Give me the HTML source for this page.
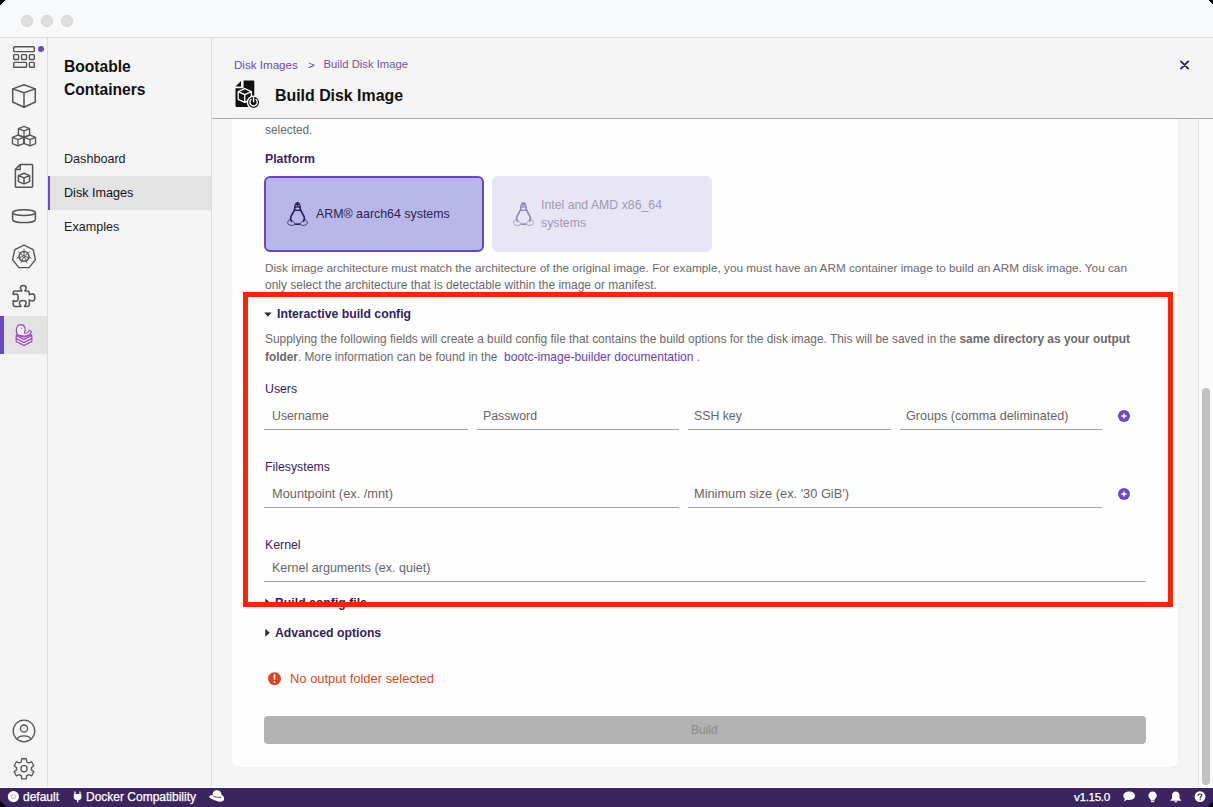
<!DOCTYPE html>
<html><head><meta charset="utf-8">
<style>
*{box-sizing:border-box;margin:0;padding:0}
html,body{width:1213px;height:807px;overflow:hidden;background:#f5f5f5;font-family:"Liberation Sans",sans-serif;position:relative}
.a{position:absolute}
.t{position:absolute;white-space:nowrap;line-height:1}
svg{position:absolute;overflow:visible}
.ic{fill:none;stroke:#555;stroke-width:1.5;stroke-linejoin:round;stroke-linecap:round}
.g{color:#6b6b6b;font-size:11.85px}
.lbl{font-size:12.3px;color:#36255f}
.ph{font-size:12.3px;color:#666}
.ul{position:absolute;height:1px;background:#a6a6a6}
.hd{font-size:12.25px;font-weight:bold;color:#2e2260}
</style></head>
<body>
<!-- title bar -->
<div class="a" style="left:0;top:0;width:1213px;height:38px;background:#f8f9fa;border-bottom:1px solid #dcdcdc"></div>
<div class="a" style="left:21px;top:15px;width:12px;height:12px;border-radius:50%;background:#dfdfdf;border:1px solid #d2d2d2"></div>
<div class="a" style="left:41px;top:15px;width:12px;height:12px;border-radius:50%;background:#dfdfdf;border:1px solid #d2d2d2"></div>
<div class="a" style="left:61px;top:15px;width:12px;height:12px;border-radius:50%;background:#dfdfdf;border:1px solid #d2d2d2"></div>

<!-- icon nav -->
<div class="a" style="left:0;top:38px;width:48px;height:750px;background:#f5f5f5;border-right:1px solid #dddddd"></div>
<div class="a" style="left:0;top:316px;width:47px;height:38px;background:#e3e3e3"></div>
<div class="a" style="left:0;top:316px;width:4px;height:38px;background:#6d48c4"></div>

<svg width="48" height="788" style="left:0;top:0">
 <!-- dashboard -->
 <g class="ic" style="stroke-width:1.4">
  <rect x="13.7" y="46.7" width="20.6" height="4.9" rx="0.8"/>
  <rect x="13.7" y="54.6" width="4.9" height="4.9" rx="0.8"/>
  <rect x="21.6" y="54.6" width="4.9" height="4.9" rx="0.8"/>
  <rect x="29.4" y="54.6" width="4.9" height="4.9" rx="0.8"/>
  <rect x="13.7" y="62.4" width="12.8" height="4.9" rx="0.8"/>
  <rect x="29.4" y="62.4" width="4.9" height="4.9" rx="0.8"/>
 </g>
 <circle cx="41" cy="49" r="3" fill="#6d48c4"/>
 <!-- containers cube -->
 <g class="ic">
  <path d="M24 84.8 L35.3 88.9 V102 L24 107.2 L12.7 102 V88.9 Z"/>
  <path d="M12.7 88.9 L24 92.8 L35.3 88.9 M24 92.8 V107"/>
 </g>
 <!-- pods -->
 <g class="ic" style="stroke-width:1.3">
  <path d="M24 126.3 L29.6 128.6 V134.8 L24 137.1 L18.4 134.8 V128.6 Z M18.4 128.6 L24 130.9 L29.6 128.6 M24 130.9 V137"/>
  <path d="M18 135.1 L23.6 137.4 V143.6 L18 145.9 L12.4 143.6 V137.4 Z M12.4 137.4 L18 139.7 L23.6 137.4 M18 139.7 V145.8"/>
  <path d="M30 135.1 L35.6 137.4 V143.6 L30 145.9 L24.4 143.6 V137.4 Z M24.4 137.4 L30 139.7 L35.6 137.4 M30 139.7 V145.8"/>
 </g>
 <!-- images doc -->
 <g class="ic">
  <path d="M20.2 164.6 H31.8 a0.8 0.8 0 0 1 0.8 0.8 V186.4 a0.8 0.8 0 0 1 -0.8 0.8 H16.2 a0.8 0.8 0 0 1 -0.8 -0.8 V169.4 Z"/>
  <path d="M20.2 164.8 V169.6 H15.6"/>
  <path d="M24 173.3 L29.6 175.6 V181.6 L24 183.9 L18.4 181.6 V175.6 Z M18.4 175.6 L24 177.9 L29.6 175.6 M24 177.9 V183.8"/>
 </g>
 <!-- volumes -->
 <g class="ic">
  <ellipse cx="24" cy="212.6" rx="11.4" ry="2.9"/>
  <path d="M12.6 212.6 V219.4 A11.4 3.2 0 0 0 35.4 219.4 V212.6"/>
 </g>
 <!-- kubernetes -->
 <g class="ic" style="stroke-width:1.4">
  <path d="M24.00 245.24 L33.19 249.67 L35.47 259.62 L29.10 267.60 L18.90 267.60 L12.53 259.62 L14.81 249.67 Z"/>
  <circle cx="24" cy="256.4" r="4.9" style="stroke-width:1.5"/>
  <circle cx="24" cy="256.4" r="1.2" style="stroke-width:1"/>
  <path d="M24.00 255.00 L24.00 249.20 M25.09 255.53 L29.63 251.91 M25.36 256.71 L31.02 258.00 M24.61 257.66 L27.12 262.89 M23.39 257.66 L20.88 262.89 M22.64 256.71 L16.98 258.00 M22.91 255.53 L18.37 251.91 " style="stroke-width:0.9"/>
 </g>
 <!-- extensions puzzle -->
 <g class="ic" style="stroke-width:1.5">
  <path d="M15.2 291.1 H21.8 C21.8 290.2 20.4 289.6 20.4 287.8 C20.4 286.2 21.6 285.4 23.3 285.4 C25 285.4 26.2 286.2 26.2 287.8 C26.2 289.6 24.8 290.2 24.8 291.1 H27.3 A2 2 0 0 1 29.3 293.1 V294.8 C30.2 294.8 30.8 293.8 32.4 293.8 C34 293.8 34.8 295 34.8 297.4 C34.8 299.8 34 301 32.4 301 C30.8 301 30.2 300 29.3 300 V304.5 A2 2 0 0 1 27.3 306.5 H24.6 C24.6 305.4 26.2 304.8 26.2 303 C26.2 301.4 25 300.6 22.8 300.6 C20.6 300.6 19.4 301.4 19.4 303 C19.4 304.8 21 305.4 21 306.5 H15.2 A2 2 0 0 1 13.2 304.5 V300.6 C14.2 300.6 14.8 301.4 16 301.4 C17.4 301.4 18.2 300 18.2 297.6 C18.2 295.2 17.4 294 16 294 C14.8 294 14.2 294.6 13.2 294.6 V293.1 A2 2 0 0 1 15.2 291.1 Z"/>
 </g>
 <!-- bootc -->
 <g fill="none" stroke="#9b3fc0" stroke-width="1.1" stroke-linejoin="round" stroke-linecap="round">
  <path d="M16.2 335.6 L24 339.4 L31.8 335.6 V341.4 L24 345.6 L16.2 341.4 Z"/>
  <path d="M16.2 338.4 L24 342.4 L31.8 338.4"/>
  <path d="M16.4 334.8 L24 337.2 L31.6 334.8"/>
  <path d="M17.2 334.2 C15.4 331.6 16 324.6 20.8 324.6 C25.4 324.6 25.8 330 24.4 333 C26.2 333.6 28.6 332.6 29.4 330.4 L31.4 331.4 C31 334 28 336 24.4 336 C21 336 18.6 335.6 17.2 334.2 Z" fill="#f7f0fa"/>
  <circle cx="21.4" cy="328.6" r="0.6" fill="#9b3fc0" stroke="none"/>
 </g>
 <!-- account -->
 <g class="ic" style="stroke-width:1.3">
  <circle cx="24" cy="731" r="10.8"/>
  <circle cx="24" cy="728.6" r="3.6"/>
  <path d="M17.2 739.2 C18.5 734.8 29.5 734.8 30.8 739.2"/>
 </g>
 <!-- gear -->
 <g class="ic" style="stroke-width:1.3">
  <path d="M21.23 761.94 L21.68 758.76 L26.32 758.76 L26.77 761.94 L28.56 762.97 L31.53 761.78 L33.85 765.79 L31.33 767.77 L31.33 769.83 L33.85 771.81 L31.53 775.82 L28.56 774.63 L26.77 775.66 L26.32 778.84 L21.68 778.84 L21.23 775.66 L19.44 774.63 L16.47 775.82 L14.15 771.81 L16.67 769.83 L16.67 767.77 L14.15 765.79 L16.47 761.78 L19.44 762.97 Z"/>
  <circle cx="24" cy="768.8" r="3.1"/>
 </g>
</svg>

<!-- sub nav -->
<div class="a" style="left:48px;top:38px;width:164px;height:750px;background:#f5f5f5;border-right:1px solid #dcdcdc"></div>
<div class="t" style="left:64px;top:58.7px;font-size:15.6px;font-weight:bold;color:#111">Bootable</div>
<div class="t" style="left:64px;top:82.2px;font-size:15.6px;font-weight:bold;color:#111">Containers</div>
<div class="t" style="left:64px;top:152.5px;font-size:12.6px;color:#222">Dashboard</div>
<div class="a" style="left:48px;top:176px;width:163px;height:34px;background:#e3e3e3"></div>
<div class="a" style="left:48px;top:176px;width:2px;height:34px;background:#6d48c4"></div>
<div class="t" style="left:64px;top:187px;font-size:12.6px;color:#111">Disk Images</div>
<div class="t" style="left:64px;top:221.3px;font-size:12.6px;color:#222">Examples</div>

<!-- main header -->
<div class="a" style="left:212px;top:38px;width:1001px;height:81px;background:#f5f5f5;border-bottom:1px solid #ababab"></div>
<div class="t" style="left:234px;top:59.4px;font-size:11.6px;color:#7446c8">Disk Images</div>
<div class="t" style="left:308px;top:59.4px;font-size:11.6px;color:#5b4a86">&gt;</div>
<div class="t" style="left:323.5px;top:59.4px;font-size:11.25px;color:#6d5c96">Build Disk Image</div>
<div class="t" style="left:275px;top:87.6px;font-size:15.9px;font-weight:bold;color:#111">Build Disk Image</div>
<svg width="30" height="30" style="left:0;top:0">
 <path d="M243.6 80.5 H253.2 a1.1 1.1 0 0 1 1.1 1.1 V106 a1 1 0 0 1 -1 1 H236.5 a1 1 0 0 1 -1 -1 V88.3 H243.6 Z" fill="#111"/>
 <path d="M235.6 86.4 L241 81 V86.4 Z" fill="#111"/>
 <g fill="none" stroke="#fff" stroke-width="1.3" stroke-linejoin="round">
  <path d="M244.8 88.6 L251.4 91.6 V99.4 L244.8 102.4 L238.2 99.4 V91.6 Z M238.2 91.6 L244.8 94.6 L251.4 91.6 M244.8 94.6 V102.2"/>
 </g>
 <circle cx="253.6" cy="102.3" r="6.2" fill="#111" stroke="#fff" stroke-width="1.4"/>
 <path d="M251 99.6 A3.7 3.7 0 1 0 256.2 99.6" fill="none" stroke="#fff" stroke-width="1.4" stroke-linecap="round"/>
 <path d="M253.6 97.6 V101.8" stroke="#fff" stroke-width="1.4" stroke-linecap="round"/>
</svg>
<svg width="10" height="10" style="left:0;top:0">
 <path d="M1181 61.4 L1188.2 68.6 M1188.2 61.4 L1181 68.6" stroke="#2f2461" stroke-width="1.9" stroke-linecap="round"/>
</svg>

<!-- content -->
<div class="a" style="left:232px;top:119px;width:946px;height:648px;background:#fefefe;border-radius:0 0 8px 8px"></div>
<!-- scrollbar -->
<div class="a" style="left:1198px;top:119px;width:15px;height:669px;background:#fafafa;border-left:1px solid #e2e2e2"></div>
<div class="a" style="left:1202px;top:388px;width:8px;height:397px;background:#c1c1c1;border-radius:4px"></div>

<div class="t g" style="left:265px;top:125px">selected.</div>
<div class="t" style="left:265px;top:152.7px;font-size:12.3px;font-weight:bold;color:#38275f">Platform</div>

<div class="a" style="left:264px;top:176px;width:220px;height:76px;background:#b9b7e9;border:2px solid #6c45c4;border-radius:6px"></div>
<div class="t" style="left:316px;top:207.6px;font-size:12.4px;color:#2b2353">ARM® aarch64 systems</div>
<div class="a" style="left:492px;top:176px;width:220px;height:76px;background:#e8e6f5;border-radius:6px"></div>
<div class="t" style="left:541px;top:198.6px;font-size:12.3px;color:#9d99b7">Intel and AMD x86_64</div>
<div class="t" style="left:541px;top:217px;font-size:12.3px;color:#9d99b7">systems</div>
<svg width="20" height="24" style="left:0;top:0"><g transform="translate(0 0)">
 <path d="M294 211 C293.6 205.5 295 202 297.5 202 C300 202 301.4 205.5 301 211 Z" fill="#2b2160"/>
 <ellipse cx="297.5" cy="208.6" rx="2.2" ry="1.2" fill="#b9b7e9"/>
 <circle cx="296.2" cy="205.8" r="0.7" fill="#b9b7e9"/><circle cx="298.8" cy="205.8" r="0.7" fill="#b9b7e9"/>
 <path d="M294.3 210 C293.6 212.6 291.6 214.6 290.8 217 C290.2 218.8 290.6 220.2 291.4 221.2 M300.7 210 C301.4 212.6 303.4 214.6 304.2 217 C304.8 218.8 304.4 220.2 303.6 221.2" fill="none" stroke="#2b2160" stroke-width="1.7" stroke-linecap="round"/>
 <path d="M290.4 219.4 C288.6 219.8 287.4 221.6 287.8 223.4 C288.3 225.3 291.2 225.7 293.6 225.2 L294.8 223.6 C293.5 222 292.2 220.2 290.4 219.4 Z M304.6 219.4 C306.4 219.8 307.6 221.6 307.2 223.4 C306.7 225.3 303.8 225.7 301.4 225.2 L300.2 223.6 C301.5 222 302.8 220.2 304.6 219.4 Z" fill="none" stroke="#2b2160" stroke-width="0.8" stroke-linejoin="round"/>
 <path d="M294.8 224.2 H300.2" stroke="#2b2160" stroke-width="1.8"/>
</g></svg>
<svg width="20" height="24" style="left:0;top:0"><g transform="translate(226 0)">
 <path d="M294 211 C293.6 205.5 295 202 297.5 202 C300 202 301.4 205.5 301 211 Z" fill="#928cae"/>
 <ellipse cx="297.5" cy="208.6" rx="2.2" ry="1.2" fill="#e8e6f5"/>
 <circle cx="296.2" cy="205.8" r="0.7" fill="#e8e6f5"/><circle cx="298.8" cy="205.8" r="0.7" fill="#e8e6f5"/>
 <path d="M294.3 210 C293.6 212.6 291.6 214.6 290.8 217 C290.2 218.8 290.6 220.2 291.4 221.2 M300.7 210 C301.4 212.6 303.4 214.6 304.2 217 C304.8 218.8 304.4 220.2 303.6 221.2" fill="none" stroke="#928cae" stroke-width="1.7" stroke-linecap="round"/>
 <path d="M290.4 219.4 C288.6 219.8 287.4 221.6 287.8 223.4 C288.3 225.3 291.2 225.7 293.6 225.2 L294.8 223.6 C293.5 222 292.2 220.2 290.4 219.4 Z M304.6 219.4 C306.4 219.8 307.6 221.6 307.2 223.4 C306.7 225.3 303.8 225.7 301.4 225.2 L300.2 223.6 C301.5 222 302.8 220.2 304.6 219.4 Z" fill="none" stroke="#928cae" stroke-width="0.8" stroke-linejoin="round"/>
 <path d="M294.8 224.2 H300.2" stroke="#928cae" stroke-width="1.8"/>
</g></svg>

<div class="t g" style="left:265px;top:262.2px;font-size:11.78px">Disk image architecture must match the architecture of the original image. For example, you must have an ARM container image to build an ARM disk image. You can</div>
<div class="t g" style="left:265px;top:280.2px;font-size:11.97px">only select the architecture that is detectable within the image or manifest.</div>

<!-- interactive build config -->
<svg width="10" height="10" style="left:0;top:0"><path d="M264.2 312.4 H271.6 L267.9 316.8 Z" fill="#2e2260"/></svg>
<div class="t hd" style="left:277px;top:307.6px">Interactive build config</div>
<div class="t g" style="left:265px;top:333.9px;font-size:11.9px">Supplying the following fields will create a build config file that contains the build options for the disk image. This will be saved in the <b>same directory as your output</b></div>
<div class="t g" style="left:265px;top:350.8px"><b>folder</b>. More information can be found in the &nbsp;<span style="color:#6a3dc2;font-size:12.1px">bootc-image-builder documentation</span>&nbsp;.</div>

<div class="t lbl" style="left:265px;top:382.8px">Users</div>
<div class="t ph" style="left:272px;top:409.7px">Username</div>
<div class="ul" style="left:264px;top:429px;width:204px"></div>
<div class="t ph" style="left:483px;top:409.7px">Password</div>
<div class="ul" style="left:477px;top:429px;width:202px"></div>
<div class="t ph" style="left:694px;top:409.7px">SSH key</div>
<div class="ul" style="left:688px;top:429px;width:203px"></div>
<div class="t ph" style="left:906px;top:409.7px;font-size:12.6px">Groups (comma deliminated)</div>
<div class="ul" style="left:900px;top:429px;width:202px"></div>
<svg width="12" height="12" style="left:0;top:0">
 <circle cx="1124" cy="416" r="6" fill="#6d48c4"/>
 <path d="M1121.4 416 H1126.6 M1124 413.4 V418.6" stroke="#fff" stroke-width="1.4"/>
 <circle cx="1124" cy="494" r="6" fill="#6d48c4"/>
 <path d="M1121.4 494 H1126.6 M1124 491.4 V496.6" stroke="#fff" stroke-width="1.4"/>
</svg>

<div class="t lbl" style="left:265px;top:461.4px">Filesystems</div>
<div class="t ph" style="left:272px;top:487.5px;font-size:12.8px">Mountpoint (ex. /mnt)</div>
<div class="ul" style="left:264px;top:507px;width:415px"></div>
<div class="t ph" style="left:694px;top:487.5px;font-size:12.8px">Minimum size (ex. '30 GiB')</div>
<div class="ul" style="left:688px;top:507px;width:414px"></div>

<div class="t lbl" style="left:265px;top:539.4px">Kernel</div>
<div class="t ph" style="left:272px;top:562.2px;font-size:12.55px">Kernel arguments (ex. quiet)</div>
<div class="ul" style="left:264px;top:581px;width:882px"></div>

<svg width="10" height="10" style="left:0;top:0">
 <path d="M265.3 598.5 V606.5 L269.8 602.5 Z" fill="#2e2260"/>
 <path d="M265.3 628.8 V636.8 L269.8 632.8 Z" fill="#2e2260"/>
</svg>
<div class="t hd" style="left:275px;top:596.6px">Build config file</div>
<div class="t hd" style="left:275px;top:627px">Advanced options</div>

<svg width="14" height="14" style="left:0;top:0">
 <circle cx="274.5" cy="678.7" r="6.5" fill="#e0441f"/>
 <path d="M274.5 675 V679.2" stroke="#fff" stroke-width="1.6" stroke-linecap="round"/>
 <circle cx="274.5" cy="681.9" r="0.9" fill="#fff"/>
</svg>
<div class="t" style="left:290px;top:673.4px;font-size:12.95px;color:#e0441f">No output folder selected</div>

<div class="a" style="left:264px;top:716px;width:882px;height:28px;background:#b3b3b3;border-radius:4px"></div>
<div class="t" style="left:691px;top:724px;font-size:12px;color:#8a8a8a">Build</div>

<!-- red box -->
<div class="a" style="left:243px;top:292px;width:930px;height:315px;border:5px solid #ff2200"></div>

<!-- status bar -->
<div class="a" style="left:0;top:787px;width:1213px;height:1px;background:#fff"></div>
<div class="a" style="left:0;top:788px;width:1213px;height:19px;background:#3b255e"></div>
<div class="t" style="left:23px;top:791.1px;font-size:12px;color:#fff;-webkit-text-stroke:0.25px #fff">default</div>
<div class="t" style="left:86px;top:791.1px;font-size:12px;color:#fff;-webkit-text-stroke:0.25px #fff">Docker Compatibility</div>
<div class="t" style="left:1074px;top:791.2px;font-size:11.7px;letter-spacing:-0.35px;color:#fff;-webkit-text-stroke:0.25px #fff">v1.15.0</div>
<svg width="1213" height="19" style="left:0;top:0">
 <!-- k8s default -->
 <circle cx="13.4" cy="796.6" r="5.6" fill="#fff"/>
 <circle cx="13.4" cy="796.6" r="2.2" fill="none" stroke="#b7a9cc" stroke-width="0.8"/>
 <!-- plug -->
 <path d="M75 791.4 V794 M80 791.4 V794" stroke="#fff" stroke-width="1.3"/>
 <path d="M73.8 794 H81.4 V797.2 C81.4 799 79.8 800.2 78.4 800.3 V802.3 H77 V800.3 C75.5 800.2 73.8 799 73.8 797.2 Z" fill="#fff"/>
 <!-- hat -->
 <path d="M212.6 795 C212.6 791.5 214.5 790.2 217 790.2 C219.4 790.2 221.2 791.6 221.6 795 C223.6 796 224.4 797.4 224 799.6 C223.4 802 220 802.2 216 800.8 C212.6 799.6 209.2 798.2 209.2 796.6 C209.2 795.6 210.6 795.2 212.6 795 Z" fill="#fff"/>
 <path d="M212.8 795.6 C214.5 797.2 217.5 797.6 221.2 797.2" fill="none" stroke="#3b255e" stroke-width="0.9"/>
 <!-- chat -->
 <path d="M1129.2 791.6 C1132.6 791.6 1135 793.4 1135 795.8 C1135 798.2 1132.6 800 1129.2 800 C1128.4 800 1127.6 799.9 1126.9 799.7 L1123.8 801.6 L1124.8 798.8 C1123.8 798 1123.4 797 1123.4 795.8 C1123.4 793.4 1125.8 791.6 1129.2 791.6 Z" fill="#fff"/>
 <!-- bulb -->
 <path d="M1152.6 791.5 C1155 791.5 1156.8 793.3 1156.8 795.6 C1156.8 797.4 1155.4 798.4 1154.6 799.6 V800.6 H1150.6 V799.6 C1149.8 798.4 1148.4 797.4 1148.4 795.6 C1148.4 793.3 1150.2 791.5 1152.6 791.5 Z" fill="#fff"/>
 <path d="M1151 801.6 H1154.2" stroke="#fff" stroke-width="1.1"/>
 <!-- bell -->
 <path d="M1175.8 791.6 C1178.2 791.6 1179.6 793.4 1179.6 796 V798.6 L1181.2 800.2 V800.8 H1170.4 V800.2 L1172 798.6 V796 C1172 793.4 1173.4 791.6 1175.8 791.6 Z" fill="#fff"/>
 <path d="M1174.6 801.8 H1177" stroke="#fff" stroke-width="1.2"/>
 <!-- help -->
 <circle cx="1200" cy="796.6" r="5.4" fill="#fff"/>
 <path d="M1198.2 795.2 C1198.2 793.6 1201.8 793.6 1201.8 795.4 C1201.8 796.6 1200.2 796.6 1200.2 797.8" fill="none" stroke="#3b255e" stroke-width="1.2" stroke-linecap="round"/>
 <circle cx="1200.2" cy="799.6" r="0.7" fill="#3b255e"/>
</svg>

<!-- window corners -->
<svg width="1213" height="807" style="left:0;top:0" shape-rendering="crispEdges">
 <path d="M0 0 H5 L0 5 Z" fill="#000"/>
 <path d="M1208 0 H1213 V5 Z" fill="#000"/>
 <path d="M0 801 L6 807 H0 Z" fill="#000"/>
 <path d="M1213 801 V807 H1207 Z" fill="#000"/>
</svg>
</body></html>
